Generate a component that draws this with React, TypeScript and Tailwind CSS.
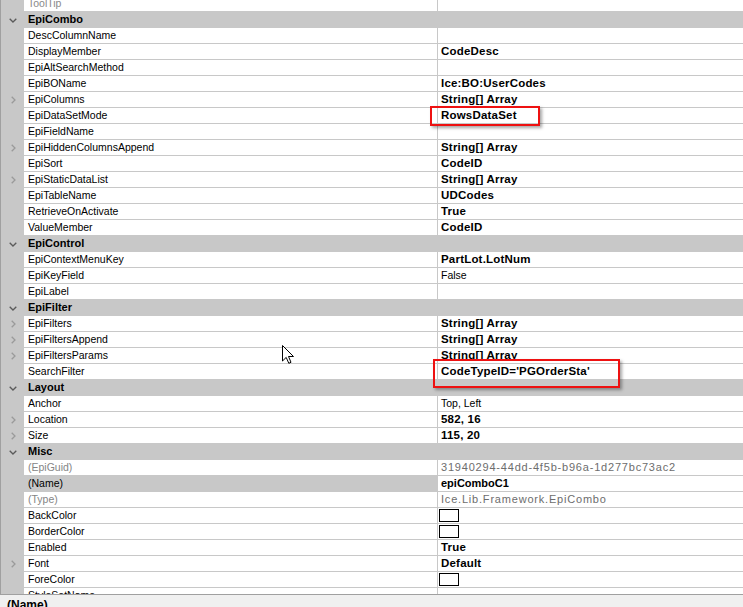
import React from 'react';

type Row =
  | { kind: 'cat'; label: string }
  | {
      kind: 'prop';
      label: string;
      value?: string;
      bold?: boolean;
      expand?: boolean;
      gray?: boolean;
      selected?: boolean;
      swatch?: boolean;
      muted?: boolean;
    };

const rows: Row[] = [
  { kind: 'prop', label: 'ToolTip', muted: true },
  { kind: 'cat', label: 'EpiCombo' },
  { kind: 'prop', label: 'DescColumnName' },
  { kind: 'prop', label: 'DisplayMember', value: 'CodeDesc', bold: true },
  { kind: 'prop', label: 'EpiAltSearchMethod' },
  { kind: 'prop', label: 'EpiBOName', value: 'Ice:BO:UserCodes', bold: true },
  { kind: 'prop', label: 'EpiColumns', value: 'String[] Array', bold: true, expand: true },
  { kind: 'prop', label: 'EpiDataSetMode', value: 'RowsDataSet', bold: true },
  { kind: 'prop', label: 'EpiFieldName' },
  { kind: 'prop', label: 'EpiHiddenColumnsAppend', value: 'String[] Array', bold: true, expand: true },
  { kind: 'prop', label: 'EpiSort', value: 'CodeID', bold: true },
  { kind: 'prop', label: 'EpiStaticDataList', value: 'String[] Array', bold: true, expand: true },
  { kind: 'prop', label: 'EpiTableName', value: 'UDCodes', bold: true },
  { kind: 'prop', label: 'RetrieveOnActivate', value: 'True', bold: true },
  { kind: 'prop', label: 'ValueMember', value: 'CodeID', bold: true },
  { kind: 'cat', label: 'EpiControl' },
  { kind: 'prop', label: 'EpiContextMenuKey', value: 'PartLot.LotNum', bold: true },
  { kind: 'prop', label: 'EpiKeyField', value: 'False' },
  { kind: 'prop', label: 'EpiLabel' },
  { kind: 'cat', label: 'EpiFilter' },
  { kind: 'prop', label: 'EpiFilters', value: 'String[] Array', bold: true, expand: true },
  { kind: 'prop', label: 'EpiFiltersAppend', value: 'String[] Array', bold: true, expand: true },
  { kind: 'prop', label: 'EpiFiltersParams', value: 'String[] Array', bold: true, expand: true },
  { kind: 'prop', label: 'SearchFilter', value: "CodeTypeID='PGOrderSta'", bold: true },
  { kind: 'cat', label: 'Layout' },
  { kind: 'prop', label: 'Anchor', value: 'Top, Left' },
  { kind: 'prop', label: 'Location', value: '582, 16', bold: true, expand: true },
  { kind: 'prop', label: 'Size', value: '115, 20', bold: true, expand: true },
  { kind: 'cat', label: 'Misc' },
  { kind: 'prop', label: '(EpiGuid)', value: '31940294-44dd-4f5b-b96a-1d277bc73ac2', gray: true },
  { kind: 'prop', label: '(Name)', value: 'epiComboC1', bold: true, selected: true },
  { kind: 'prop', label: '(Type)', value: 'Ice.Lib.Framework.EpiCombo', gray: true },
  { kind: 'prop', label: 'BackColor', swatch: true },
  { kind: 'prop', label: 'BorderColor', swatch: true },
  { kind: 'prop', label: 'Enabled', value: 'True', bold: true },
  { kind: 'prop', label: 'Font', value: 'Default', bold: true, expand: true },
  { kind: 'prop', label: 'ForeColor', swatch: true },
  { kind: 'prop', label: 'StyleSetName' },
];

const ChevronDown = () => (
  <svg width="8" height="5" viewBox="0 0 8 5" className="mt-[1px]">
    <path d="M0.7 0.7 L4 4 L7.3 0.7" fill="none" stroke="#5a5a5a" strokeWidth="1.3" />
  </svg>
);

const ChevronRight = () => (
  <svg width="5" height="8" viewBox="0 0 5 8" className="ml-[1px]">
    <path d="M0.7 0.7 L4 4 L0.7 7.3" fill="none" stroke="#9a9a9a" strokeWidth="1.3" />
  </svg>
);

const PropRow = ({ row }: { row: Row }) => {
  if (row.kind === 'cat') {
    return (
      <div className="flex h-[16px] bg-[#c8c8c8]">
        <div className="w-[23px] flex items-center justify-center">
          <ChevronDown />
        </div>
        <div className="flex-1 pl-[4px] text-[11px] leading-[15px] font-bold text-black">
          {row.label}
        </div>
      </div>
    );
  }

  let valueClass = 'text-[10.5px] text-black';
  if (row.bold) valueClass = 'text-[11.5px] font-bold tracking-[0.2px] text-black';
  if (row.gray) valueClass = 'text-[11px] tracking-[0.8px] text-[#6d6d6d]';
  if (row.selected) valueClass = 'text-[11px] font-bold text-black';

  return (
    <div className="flex h-[16px]">
      <div className="w-[23px] bg-[#c8c8c8] flex items-center justify-center">
        {row.expand && <ChevronRight />}
      </div>
      <div className="flex flex-1 border-b border-[#c8c8c8]">
        <div
          className={`w-[414px] shrink-0 border-r border-[#c8c8c8] pl-[4px] text-[10.5px] leading-[15px] whitespace-nowrap overflow-hidden ${
            row.selected ? 'bg-[#c8c8c8]' : ''
          } ${row.gray ? 'text-[#858585]' : row.muted ? 'text-[#8a8a8a]' : 'text-black'}`}
        >
          {row.label}
        </div>
        {row.swatch ? (
          <div className="pl-[1px]">
            <div className="mt-[1px] w-[20px] h-[13px] border border-black bg-white" />
          </div>
        ) : (
          <div className={`flex-1 pl-[3px] leading-[15px] whitespace-nowrap ${valueClass}`}>
            {row.value}
          </div>
        )}
      </div>
    </div>
  );
};

export default function App() {
  return (
    <div className="relative w-[743px] h-[607px] overflow-hidden bg-white flex flex-col font-['Liberation_Sans',Arial,sans-serif]">
      <div className="h-[594px] shrink-0 overflow-hidden border-l border-[#a0a0a0]">
        <div className="-mt-[4px]">
          {rows.map((r, i) => (
            <PropRow key={i} row={r} />
          ))}
        </div>
      </div>
      <div className="flex-1 border-t border-[#a0a0a0] bg-[#f0f0f0] pl-[7px] pt-[3px]">
        <div className="text-[12px] leading-[15px] font-bold text-black">(Name)</div>
      </div>

      {/* red highlight boxes */}
      <div className="absolute left-[430px] top-[106px] w-[110px] h-[20px] border-2 border-[#ee1111] shadow-[2px_2px_3px_rgba(0,0,0,0.35)]" />
      <div className="absolute left-[433px] top-[359px] w-[187px] h-[29px] border-2 border-[#ee1111] shadow-[2px_2px_3px_rgba(0,0,0,0.35)]" />

      {/* mouse pointer */}
      <svg className="absolute left-[282px] top-[345px]" width="13" height="20" viewBox="0 0 13 20">
        <path
          d="M0.5 0.5 L0.5 16 L4.2 12.4 L6.8 18.3 L9 17.3 L6.5 11.5 L11.5 11.5 Z"
          fill="#fff"
          stroke="#000"
          strokeWidth="1"
          strokeLinejoin="miter"
        />
      </svg>
    </div>
  );
}
